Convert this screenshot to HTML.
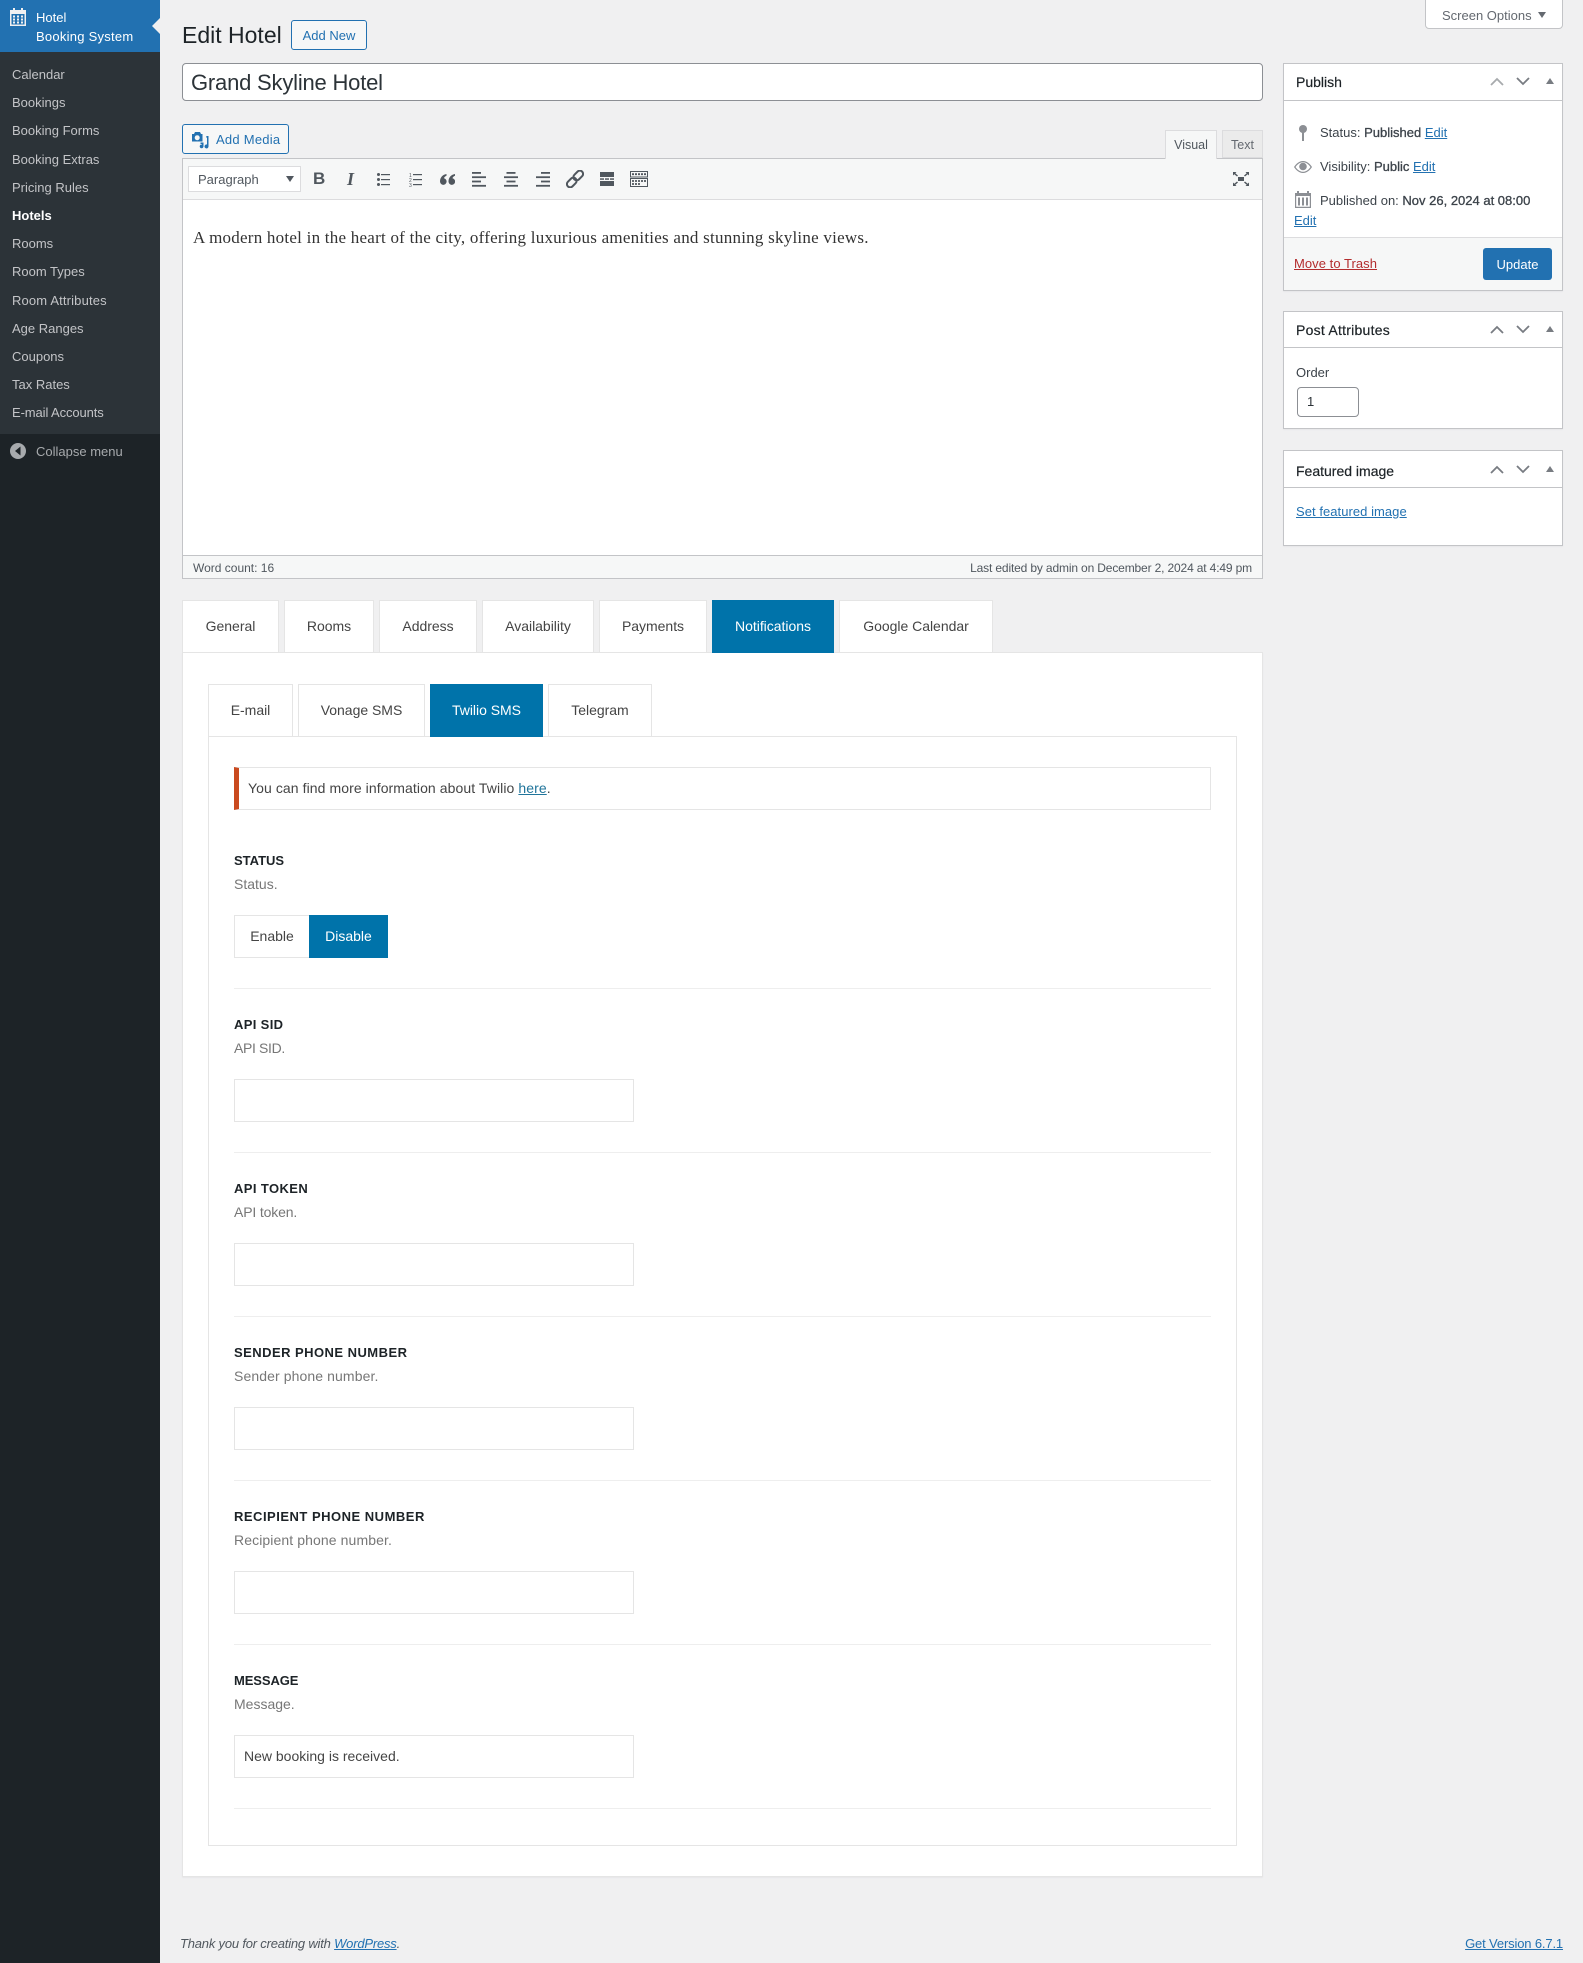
<!DOCTYPE html>
<html lang="en"><head><meta charset="utf-8"><title>Edit Hotel</title>
<style>
*{box-sizing:border-box}
html,body{margin:0;padding:0}
body{width:1583px;height:1963px;position:relative;overflow:hidden;background:#f0f0f1;font-family:"Liberation Sans",sans-serif;font-size:13px;color:#3c434a}
.t{position:absolute;white-space:nowrap;line-height:20px}
.b{position:absolute}
a{color:#2271b1;text-decoration:underline}
.m{color:#c3c4c7;left:12px;font-size:13px}
.wb{position:absolute;background:#fff;border:1px solid #c3c4c7;box-shadow:0 1px 1px rgba(0,0,0,.04)}
.tab{position:absolute;background:#fff;border:1px solid #e5e5e5;text-align:center;font-size:14px;color:#444;line-height:50px;height:53px;letter-spacing:-.02px}
.tab.on{background:#0073aa;border-color:#0073aa;color:#fff}
.lab{left:234px;font-weight:bold;font-size:13px;color:#1d2327;position:absolute;white-space:nowrap;line-height:20px}
.des{left:234px;font-size:14px;color:#777;position:absolute;white-space:nowrap;line-height:20px}
.inp{position:absolute;left:234px;width:400px;height:43px;background:#fff;border:1px solid #e5e5e5;font-size:14px;color:#444;line-height:41px;padding-left:9px}
.hr{position:absolute;left:234px;width:977px;height:1px;background:#eeeeee}
svg{position:absolute;display:block}
.h{font-size:14px;color:#1d2327;left:1296px;-webkit-text-stroke:.2px #1d2327}
b.s{font-weight:normal;-webkit-text-stroke:.3px #3c434a}
</style></head><body>

<!-- sidebar -->
<div class="b" style="left:0;top:0;width:160px;height:1963px;background:#1d2327"></div>
<div class="b" style="left:0;top:52px;width:160px;height:382px;background:#2c3338"></div>
<div class="b" style="left:0;top:0;width:160px;height:52px;background:#2271b1"></div>
<div class="b" style="left:152px;top:18px;width:0;height:0;border-style:solid;border-width:8px 8px 8px 0;border-color:transparent #f0f0f1 transparent transparent"></div>
<svg style="left:10px;top:8px" width="16" height="18" viewBox="0 0 16 18"><path fill="#f0f0f1" fill-rule="evenodd" d="M3 0h2v2h6V0h2v2h3v16H0V2h3zM1.500 6v10.500h13V6zM3 7.500h2v2H3zM7 7.500h2v2H7zM11 7.500h2v2h-2zM3 10.500h2v2H3zM7 10.500h2v2H7zM11 10.500h2v2h-2zM3 13.500h2v2H3zM7 13.500h2v2H7zM11 13.500h2v2h-2z"/></svg>
<div class="t" style="left:36px;top:8px;color:#fff">Hotel</div>
<div class="t" style="left:36px;top:27px;color:#fff;letter-spacing:.25px">Booking System</div>
<div class="t m" style="top:65px">Calendar</div>
<div class="t m" style="top:93px">Bookings</div>
<div class="t m" style="top:121px">Booking Forms</div>
<div class="t m" style="top:150px">Booking Extras</div>
<div class="t m" style="top:178px">Pricing Rules</div>
<div class="t m" style="top:206px;color:#fff;font-weight:bold">Hotels</div>
<div class="t m" style="top:234px">Rooms</div>
<div class="t m" style="top:262px">Room Types</div>
<div class="t m" style="top:291px;letter-spacing:.15px">Room Attributes</div>
<div class="t m" style="top:319px">Age Ranges</div>
<div class="t m" style="top:347px">Coupons</div>
<div class="t m" style="top:375px">Tax Rates</div>
<div class="t m" style="top:403px;letter-spacing:-.1px">E-mail Accounts</div>
<svg style="left:10px;top:443px" width="16" height="16" viewBox="0 0 16 16"><circle cx="8" cy="8" r="8" fill="#a7aaad"/><path d="M10.500 3.500v9L5 8z" fill="#1d2327"/></svg>
<div class="t" style="left:36px;top:442px;color:#a7aaad">Collapse menu</div>

<!-- head -->
<div class="t" style="left:182px;top:20px;font-size:23px;line-height:30px;color:#1d2327">Edit Hotel</div>
<div class="b" style="left:291px;top:20px;width:76px;height:30px;border:1px solid #2271b1;border-radius:3px;background:#f6f7f7;color:#2271b1;text-align:center;line-height:30px">Add New</div>
<div class="b" style="left:1425px;top:-1px;width:138px;height:30px;border:1px solid #c3c4c7;border-radius:0 0 4px 4px;background:#fff"></div>
<div class="t" style="left:1442px;top:6px;color:#646970">Screen Options</div>
<div class="b" style="left:1538px;top:12px;width:0;height:0;border-style:solid;border-width:6px 4px 0 4px;border-color:#646970 transparent transparent"></div>

<!-- title -->
<div class="b" style="left:182px;top:63px;width:1081px;height:38px;border:1px solid #8c8f94;border-radius:4px;background:#fff;font-size:22px;line-height:38px;padding-left:8px;color:#2c3338;letter-spacing:-.2px">Grand Skyline Hotel</div>

<!-- add media -->
<div class="b" style="left:182px;top:124px;width:107px;height:30px;border:1px solid #2271b1;border-radius:3px;background:#f6f7f7"></div>
<svg style="left:191px;top:132px" width="18" height="17" viewBox="0 0 18 17"><path fill="#2271b1" fill-rule="evenodd" d="M4 0h5l1 2h1.500v7.500H1V2h2zM6.200 3.200a2.500 2.500 0 1 0 .01 0z"/><path fill="#2271b1" d="M15.500 4h2v10.500a2 2 0 1 1-1.500-2V5.500h-1zM9.500 10.500l3 0v3.800a1.900 1.900 0 1 1-1.500-1.800V12H9.500z"/></svg>
<div class="t" style="left:216px;top:130px;color:#2271b1;letter-spacing:.25px">Add Media</div>

<!-- editor tabs -->
<div class="b" style="left:1165px;top:130px;width:52px;height:29px;background:#f6f7f7;border:1px solid #dcdcde;border-bottom:0;text-align:center;line-height:28px;font-size:12.500px;color:#50575e;z-index:2">Visual</div>
<div class="b" style="left:1222px;top:130px;width:41px;height:28px;background:#ebebeb;border:1px solid #dcdcde;text-align:center;line-height:28px;font-size:12.500px;color:#646970">Text</div>

<!-- editor -->
<div class="b" style="left:182px;top:158px;width:1081px;height:421px;border:1px solid #c3c4c7;background:#fff"></div>
<div class="b" style="left:183px;top:159px;width:1079px;height:41px;background:#f6f7f7;border-bottom:1px solid #dcdcde"></div>
<div class="b" style="left:188px;top:166px;width:113px;height:26px;background:#fff;border:1px solid #dcdcde"></div>
<div class="t" style="left:198px;top:170px;color:#50575e">Paragraph</div>
<div class="b" style="left:286px;top:176px;width:0;height:0;border-style:solid;border-width:6px 4px 0 4px;border-color:#50575e transparent transparent"></div>

<div class="t" style="left:313px;top:169px;font-size:17px;font-weight:bold;color:#50575e">B</div>
<div class="t" style="left:347px;top:169px;font-size:18px;font-weight:bold;font-style:italic;font-family:'Liberation Serif',serif;color:#50575e">I</div>
<svg style="left:377px;top:173px" width="13" height="13" viewBox="0 0 13 13" fill="#50575e"><circle cx="1.500" cy="1.500" r="1.500"/><circle cx="1.500" cy="6.500" r="1.500"/><circle cx="1.500" cy="11.500" r="1.500"/><rect x="4" y="1" width="9" height="1.200"/><rect x="4" y="6" width="9" height="1.200"/><rect x="4" y="11" width="9" height="1.200"/></svg>
<svg style="left:409px;top:172px" width="13" height="15" viewBox="0 0 13 15"><g fill="#50575e"><rect x="4" y="2" width="9" height="1.200"/><rect x="4" y="7" width="9" height="1.200"/><rect x="4" y="12" width="9" height="1.200"/></g><text x="0" y="5" font-size="5" fill="#50575e" font-family="Liberation Sans">1</text><text x="0" y="10" font-size="5" fill="#50575e" font-family="Liberation Sans">2</text><text x="0" y="15" font-size="5" fill="#50575e" font-family="Liberation Sans">3</text></svg>
<svg style="left:440px;top:174px" width="15" height="11" viewBox="0 0 15 11" fill="#50575e"><path d="M6.500 0v1.800C5 2.400 4.200 3.200 4 4.300a3.300 3.300 0 1 1-4 3.200C0 3.600 2.500.7 6.500 0zM15 0v1.800c-1.500.6-2.300 1.400-2.500 2.500a3.300 3.300 0 1 1-4 3.200C8.500 3.600 11 .7 15 0z"/></svg>
<svg style="left:472px;top:172px" width="14" height="15" viewBox="0 0 14 15" fill="#50575e"><rect width="9" height="1.800" y="0"/><rect width="14" height="1.800" y="4.300"/><rect width="9" height="1.800" y="8.600"/><rect width="14" height="1.800" y="12.900"/></svg>
<svg style="left:504px;top:172px" width="14" height="15" viewBox="0 0 14 15" fill="#50575e"><rect x="2.500" width="9" height="1.800" y="0"/><rect width="14" height="1.800" y="4.300"/><rect x="2.500" width="9" height="1.800" y="8.600"/><rect width="14" height="1.800" y="12.900"/></svg>
<svg style="left:536px;top:172px" width="14" height="15" viewBox="0 0 14 15" fill="#50575e"><rect x="5" width="9" height="1.800" y="0"/><rect width="14" height="1.800" y="4.300"/><rect x="5" width="9" height="1.800" y="8.600"/><rect width="14" height="1.800" y="12.900"/></svg>
<svg style="left:566px;top:170px" width="18" height="18" viewBox="0 0 18 18" fill="none" stroke="#50575e" stroke-width="2"><rect x="9" y="0" width="6.500" height="11" rx="3.250" transform="rotate(45 12.250 5.500)"/><rect x="2.500" y="7" width="6.500" height="11" rx="3.250" transform="rotate(45 5.750 12.500)"/></svg>
<svg style="left:600px;top:172px" width="14" height="14" viewBox="0 0 14 14" fill="#50575e"><rect width="14" height="5"/><rect width="4" height="1.500" y="6.300"/><rect x="5" width="4" height="1.500" y="6.300"/><rect x="10" width="4" height="1.500" y="6.300"/><rect width="14" height="5" y="9"/></svg>
<svg style="left:630px;top:171px" width="18" height="16" viewBox="0 0 18 16" fill="none" stroke="#50575e"><rect x=".5" y=".5" width="17" height="5.500"/><rect x=".5" y="7.500" width="17" height="8"/><path d="M2 3.200h14M2 10h14M2 13h9" stroke-width="1.800" stroke-dasharray="2 1"/></svg>
<svg style="left:1233px;top:172px" width="16" height="14" viewBox="0 0 16 14" fill="#50575e"><rect x="5" y="5" width="6" height="4"/><path d="M0 0h3.500L2.300 1.200 5 3.500 4 4.500 1.300 2.200 0 3.500zM16 0h-3.500l1.200 1.200L11 3.500l1 1 2.700-2.300L16 3.500zM0 14h3.500l-1.200-1.200L5 10.500l-1-1-2.700 2.300L0 10.500zM16 14h-3.500l1.200-1.200L11 10.500l1-1 2.700 2.300 1.300-1.300z"/></svg>

<div class="t" style="left:193px;top:228px;font-family:'Liberation Serif',serif;font-size:17px;line-height:20px;color:#333;letter-spacing:.24px">A modern hotel in the heart of the city, offering luxurious amenities and stunning skyline views.</div>

<div class="b" style="left:183px;top:555px;width:1079px;height:23px;background:#f6f7f7;border-top:1px solid #c3c4c7"></div>
<div class="t" style="left:193px;top:558px;font-size:12px;color:#50575e">Word count: 16</div>
<div class="t" style="right:331px;top:558px;font-size:12px;color:#50575e;letter-spacing:-.15px">Last edited by admin on December 2, 2024 at 4:49 pm</div>

<!-- tabs -->
<div class="b" style="left:182px;top:652px;width:1081px;height:1225px;background:#fff;border:1px solid #e5e5e5;box-shadow:0 1px 1px rgba(0,0,0,.04)"></div>
<div class="tab" style="left:182px;top:600px;width:97px">General</div>
<div class="tab" style="left:284px;top:600px;width:90px">Rooms</div>
<div class="tab" style="left:379px;top:600px;width:98px">Address</div>
<div class="tab" style="left:482px;top:600px;width:112px">Availability</div>
<div class="tab" style="left:599px;top:600px;width:108px">Payments</div>
<div class="tab on" style="left:712px;top:600px;width:122px">Notifications</div>
<div class="tab" style="left:839px;top:600px;width:154px">Google Calendar</div>

<div class="b" style="left:208px;top:736px;width:1029px;height:1110px;background:#fff;border:1px solid #e5e5e5"></div>
<div class="tab" style="left:208px;top:684px;width:85px">E-mail</div>
<div class="tab" style="left:298px;top:684px;width:127px">Vonage SMS</div>
<div class="tab on" style="left:430px;top:684px;width:113px">Twilio SMS</div>
<div class="tab" style="left:548px;top:684px;width:104px">Telegram</div>

<div class="b" style="left:234px;top:767px;width:977px;height:43px;border:1px solid #e5e5e5;border-left:5px solid #ca4a1f;background:#fff"></div>
<div class="t" style="left:248px;top:778px;font-size:14px;color:#444;letter-spacing:.08px">You can find more information about Twilio <a href="#" style="color:#21759b">here</a>.</div>

<div class="lab" style="top:851px">STATUS</div>
<div class="des" style="top:874px">Status.</div>
<div class="b" style="left:234px;top:915px;width:75px;height:43px;border:1px solid #e5e5e5;border-right:0;background:#fff;text-align:center;font-size:14px;line-height:41px;color:#444">Enable</div>
<div class="b" style="left:309px;top:915px;width:79px;height:43px;background:#0073aa;text-align:center;font-size:14px;line-height:43px;color:#fff">Disable</div>
<div class="hr" style="top:988px"></div>

<div class="lab" style="top:1015px;letter-spacing:.35px">API SID</div>
<div class="des" style="top:1038px;letter-spacing:-.35px">API SID.</div>
<div class="inp" style="top:1079px"></div>
<div class="hr" style="top:1152px"></div>

<div class="lab" style="top:1179px;letter-spacing:.4px">API TOKEN</div>
<div class="des" style="top:1202px;letter-spacing:-.15px">API token.</div>
<div class="inp" style="top:1243px"></div>
<div class="hr" style="top:1316px"></div>

<div class="lab" style="top:1343px;letter-spacing:.46px">SENDER PHONE NUMBER</div>
<div class="des" style="top:1366px;letter-spacing:.1px">Sender phone number.</div>
<div class="inp" style="top:1407px"></div>
<div class="hr" style="top:1480px"></div>

<div class="lab" style="top:1507px;letter-spacing:.5px">RECIPIENT PHONE NUMBER</div>
<div class="des" style="top:1530px;letter-spacing:.1px">Recipient phone number.</div>
<div class="inp" style="top:1571px"></div>
<div class="hr" style="top:1644px"></div>

<div class="lab" style="top:1671px;letter-spacing:-.1px">MESSAGE</div>
<div class="des" style="top:1694px">Message.</div>
<div class="inp" style="top:1735px">New booking is received.</div>
<div class="hr" style="top:1808px"></div>

<!-- publish -->
<div class="wb" style="left:1283px;top:63px;width:280px;height:228px"></div>
<div class="b" style="left:1284px;top:100px;width:278px;height:1px;background:#c3c4c7"></div>
<div class="t h" style="top:72px">Publish</div>
<svg style="left:1490px;top:77px" width="14" height="9" viewBox="0 0 14 9" fill="none" stroke="#a7aaad" stroke-width="1.800"><path d="M1 8l6-6 6 6"/></svg>
<svg style="left:1516px;top:77px" width="14" height="9" viewBox="0 0 14 9" fill="none" stroke="#787c82" stroke-width="1.800"><path d="M1 1l6 6 6-6"/></svg>
<div class="b" style="left:1546px;top:78px;width:0;height:0;border-style:solid;border-width:0 4px 6px 4px;border-color:transparent transparent #787c82"></div>

<svg style="left:1299px;top:125px" width="8" height="16" viewBox="0 0 8 16" fill="#8c8f94"><circle cx="4" cy="4" r="4"/><rect x="3" y="6" width="2" height="10"/></svg>
<div class="t" style="left:1320px;top:123px">Status: <b class="s">Published</b> <a href="#">Edit</a></div>
<svg style="left:1294px;top:161px" width="18" height="12" viewBox="0 0 18 12" fill="#8c8f94"><path fill-rule="evenodd" d="M9 0c4 0 7 3 9 6-2 3-5 6-9 6S2 9 0 6c2-3 5-6 9-6zM9 1.200C6 1.200 3.300 3.300 1.500 6 3.300 8.700 6 10.800 9 10.800s5.700-2.100 7.500-4.800C14.700 3.300 12 1.200 9 1.200z"/><circle cx="9" cy="5.500" r="3.800"/></svg>
<div class="t" style="left:1320px;top:157px">Visibility: <b class="s">Public</b> <a href="#">Edit</a></div>
<svg style="left:1295px;top:191px" width="16" height="17" viewBox="0 0 16 17" fill="#8c8f94"><path fill-rule="evenodd" d="M2 0h2v2h8V0h2v2h2v15H0V2h2zM1.200 5v10.800h13.600V5z"/><rect x="3" y="6.500" width="2" height="8"/><rect x="7" y="6.500" width="2" height="8"/><rect x="11" y="6.500" width="2" height="8"/></svg>
<div class="t" style="left:1320px;top:191px">Published on: <b class="s">Nov 26, 2024 at 08:00</b></div>
<div class="t" style="left:1294px;top:211px"><a href="#">Edit</a></div>
<div class="b" style="left:1284px;top:237px;width:278px;height:53px;background:#f6f7f7;border-top:1px solid #dcdcde"></div>
<div class="t" style="left:1294px;top:254px;letter-spacing:.05px"><a href="#" style="color:#b32d2e">Move to Trash</a></div>
<div class="b" style="left:1483px;top:248px;width:69px;height:32px;background:#2271b1;border-radius:3px;color:#fff;text-align:center;line-height:34px">Update</div>

<!-- post attrs -->
<div class="wb" style="left:1283px;top:311px;width:280px;height:118px"></div>
<div class="b" style="left:1284px;top:347px;width:278px;height:1px;background:#c3c4c7"></div>
<div class="t h" style="top:320px;letter-spacing:.25px">Post Attributes</div>
<svg style="left:1490px;top:325px" width="14" height="9" viewBox="0 0 14 9" fill="none" stroke="#787c82" stroke-width="1.800"><path d="M1 8l6-6 6 6"/></svg>
<svg style="left:1516px;top:325px" width="14" height="9" viewBox="0 0 14 9" fill="none" stroke="#787c82" stroke-width="1.800"><path d="M1 1l6 6 6-6"/></svg>
<div class="b" style="left:1546px;top:326px;width:0;height:0;border-style:solid;border-width:0 4px 6px 4px;border-color:transparent transparent #787c82"></div>
<div class="t" style="left:1296px;top:363px">Order</div>
<div class="b" style="left:1297px;top:387px;width:62px;height:30px;border:1px solid #8c8f94;border-radius:4px;background:#fff;padding-left:9px;line-height:28px;font-size:13px;color:#2c3338">1</div>

<!-- featured -->
<div class="wb" style="left:1283px;top:450px;width:280px;height:96px"></div>
<div class="b" style="left:1284px;top:487px;width:278px;height:1px;background:#c3c4c7"></div>
<div class="t h" style="top:461px">Featured image</div>
<svg style="left:1490px;top:465px" width="14" height="9" viewBox="0 0 14 9" fill="none" stroke="#787c82" stroke-width="1.800"><path d="M1 8l6-6 6 6"/></svg>
<svg style="left:1516px;top:465px" width="14" height="9" viewBox="0 0 14 9" fill="none" stroke="#787c82" stroke-width="1.800"><path d="M1 1l6 6 6-6"/></svg>
<div class="b" style="left:1546px;top:466px;width:0;height:0;border-style:solid;border-width:0 4px 6px 4px;border-color:transparent transparent #787c82"></div>
<div class="t" style="left:1296px;top:502px;letter-spacing:.05px"><a href="#">Set featured image</a></div>

<!-- footer -->
<div class="t" style="left:180px;top:1934px;font-style:italic;color:#50575e;letter-spacing:-.2px">Thank you for creating with <a href="#">WordPress</a>.</div>
<div class="t" style="right:20px;top:1934px;letter-spacing:-.15px"><a href="#">Get Version 6.7.1</a></div>
</body></html>
